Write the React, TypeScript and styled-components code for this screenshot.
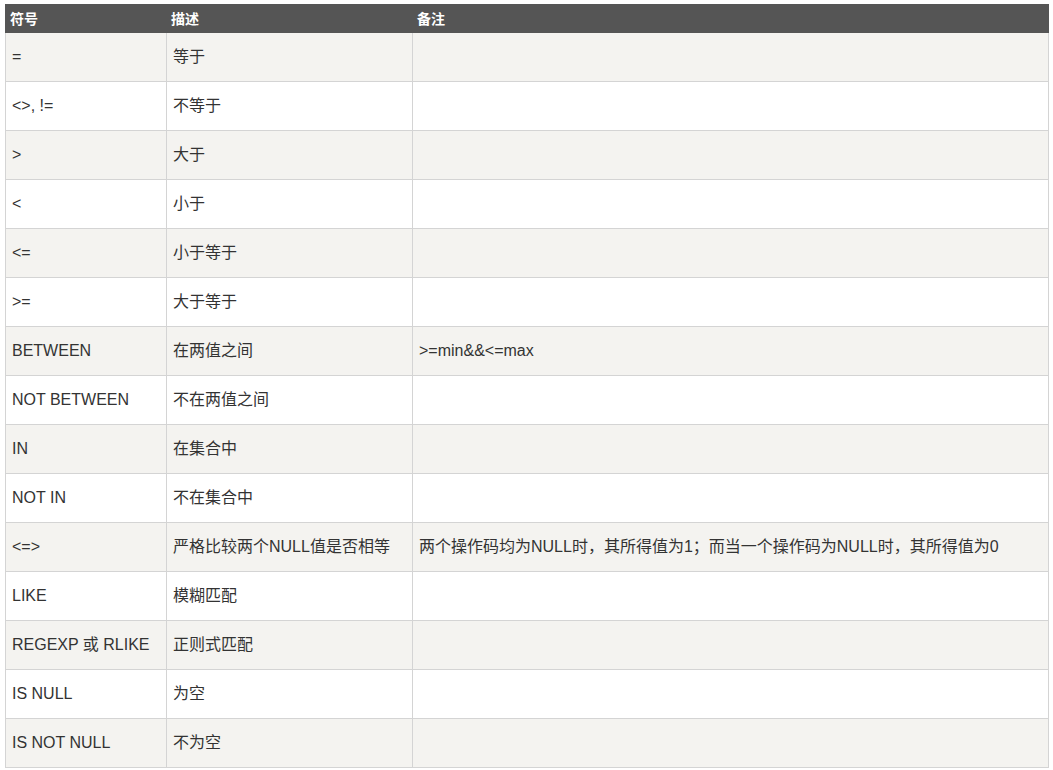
import styled, { createGlobalStyle } from "styled-components";

const GlobalStyle = createGlobalStyle`
    html, body {
        margin: 0;
        padding: 0;
        background-color: #fff;
    }

    body {
        padding: 4px 5px;
        font-family: "Liberation Sans", "Noto Sans CJK SC", sans-serif;
        color: #333;
    }
`

const Table = styled.table`
    width: 1043px;
    border-collapse: collapse;
    table-layout: fixed;
`

const HeadCell = styled.th`
    height: 27px;
    padding: 0 4px;
    background-color: #555;
    color: #fff;
    border: 1px solid #555;
    font-size: 14px;
    font-weight: bold;
    text-align: left;
    vertical-align: middle;
    line-height: 20px;
`

const Row = styled.tr<{ $odd: boolean }>`
    background-color: ${({ $odd }) => ($odd ? "#f4f3f0" : "#fff")};
`

const Cell = styled.td`
    height: 48px;
    padding: 0 6px;
    border: 1px solid #d4d4d4;
    font-size: 16px;
    line-height: 24px;
    vertical-align: middle;
    white-space: nowrap;
    color: #333;
`

const rows: [string, string, string][] = [
    ["=", "等于", ""],
    ["<>, !=", "不等于", ""],
    [">", "大于", ""],
    ["<", "小于", ""],
    ["<=", "小于等于", ""],
    [">=", "大于等于", ""],
    ["BETWEEN", "在两值之间", ">=min&&<=max"],
    ["NOT BETWEEN", "不在两值之间", ""],
    ["IN", "在集合中", ""],
    ["NOT IN", "不在集合中", ""],
    ["<=>", "严格比较两个NULL值是否相等", "两个操作码均为NULL时，其所得值为1；而当一个操作码为NULL时，其所得值为0"],
    ["LIKE", "模糊匹配", ""],
    ["REGEXP 或 RLIKE", "正则式匹配", ""],
    ["IS NULL", "为空", ""],
    ["IS NOT NULL", "不为空", ""],
];

const App = (): JSX.Element => {
    return (
        <>
            <GlobalStyle />
            <Table>
                <colgroup>
                    <col style={{ width: 161 }} />
                    <col style={{ width: 246 }} />
                    <col style={{ width: 636 }} />
                </colgroup>
                <thead>
                    <tr>
                        <HeadCell>符号</HeadCell>
                        <HeadCell>描述</HeadCell>
                        <HeadCell>备注</HeadCell>
                    </tr>
                </thead>
                <tbody>
                    {rows.map(([sym, desc, note], i) => (
                        <Row key={sym} $odd={i % 2 === 0}>
                            <Cell>{sym}</Cell>
                            <Cell>{desc}</Cell>
                            <Cell>{note}</Cell>
                        </Row>
                    ))}
                </tbody>
            </Table>
        </>
    )
}

export default App;
